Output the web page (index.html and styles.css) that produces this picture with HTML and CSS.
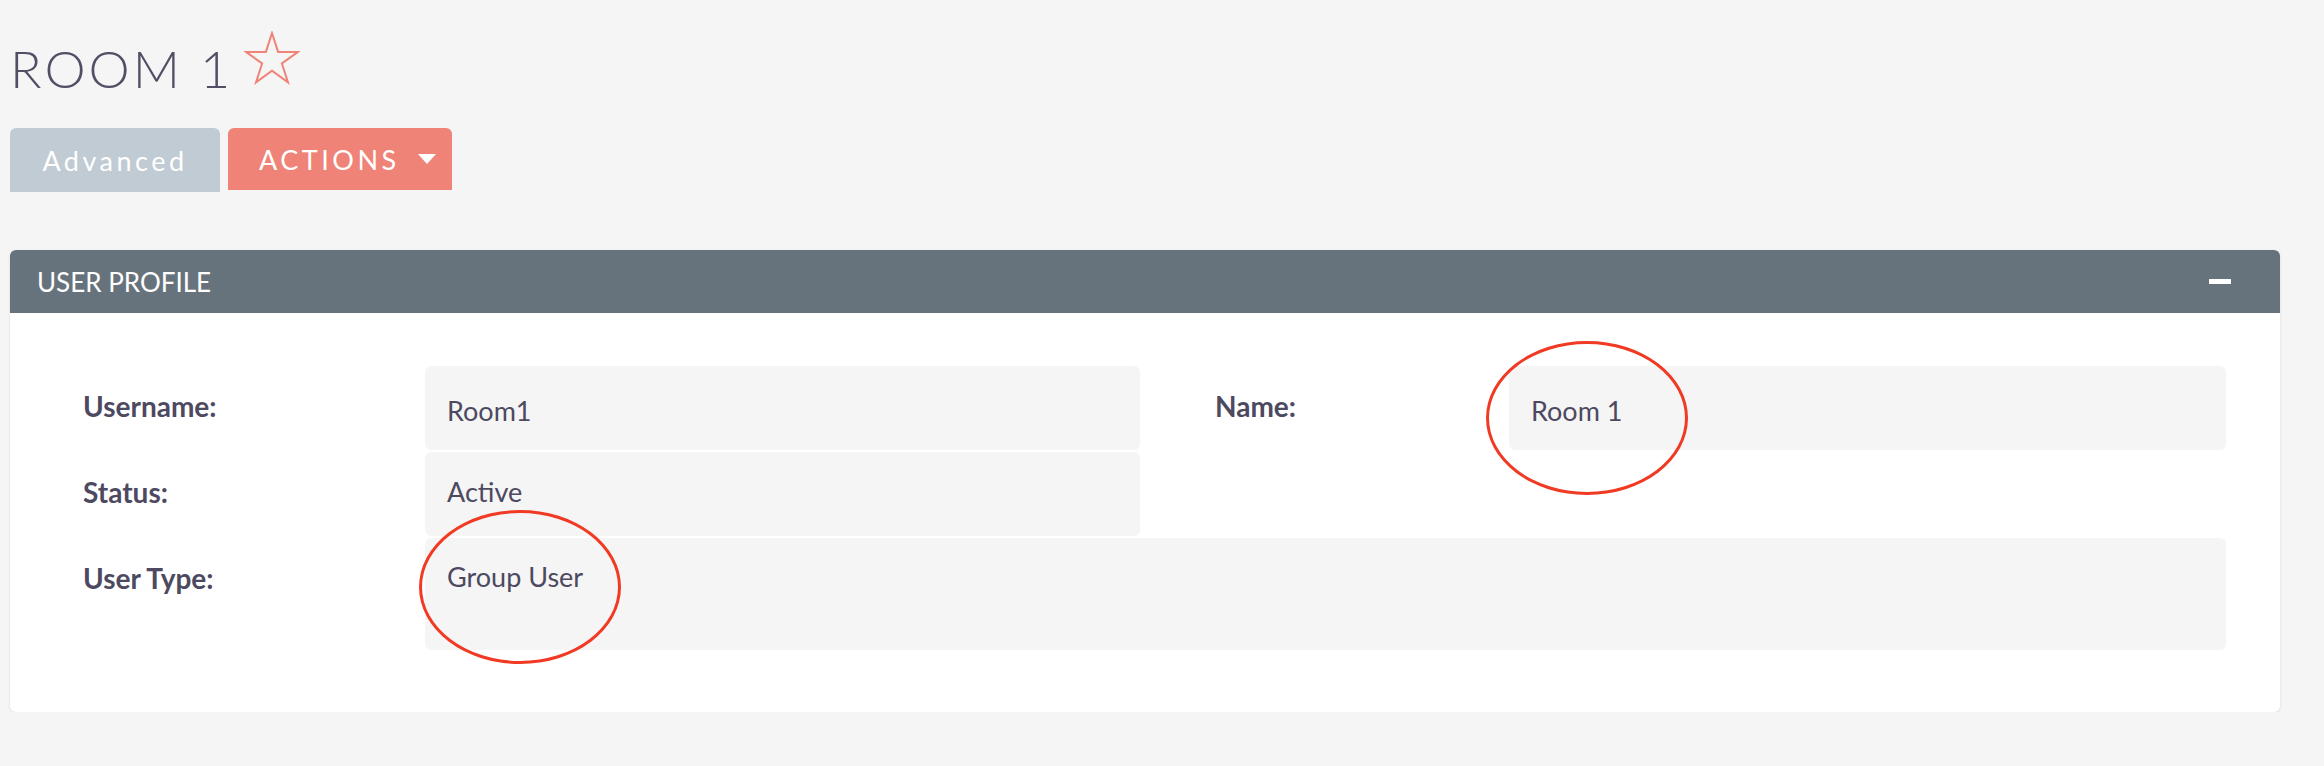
FILE: index.html
```html
<!DOCTYPE html>
<html lang="en">
<head>
<meta charset="UTF-8" />
<title>Room 1</title>
<link rel="stylesheet" href="styles.css">
</head>
<body>

<div class="page">
  <div class="title-row">
    <h1 class="title">ROOM 1</h1>
    <svg class="star" width="56" height="54" viewBox="0 0 56 54">
      <polygon points="28,2 34.1,20.9 54,20.9 37.9,32.5 44,51.4 28,39.7 12,51.4 18.1,32.5 2,20.9 21.9,20.9"
               fill="none" stroke="#f08377" stroke-width="2" stroke-linejoin="miter"/>
    </svg>
  </div>

  <div class="buttons">
    <button class="btn btn-advanced">Advanced</button>
    <button class="btn btn-actions">ACTIONS <span class="caret"></span></button>
  </div>

  <div class="panel">
    <div class="panel-heading">
      <span>USER PROFILE</span>
      <span class="collapse"></span>
    </div>
    <div class="panel-body">
      <div class="label row-1">Username:</div>
      <div class="value row-1">Room1</div>
      <div class="label label-2 row-1">Name:</div>
      <div class="value value-2 row-1">Room 1<span class="mark mark-name"></span></div>

      <div class="label row-2">Status:</div>
      <div class="value row-2">Active</div>

      <div class="label row-3">User Type:</div>
      <div class="value value-wide row-3">Group User<span class="mark mark-type"></span></div>
    </div>
  </div>
</div>

</body>
</html>
```

FILE: styles.css
```css
:root {
  --page-bg: #f5f5f5;
  --text: #4d4960;
  --heading-bg: #67737c;
  --field-bg: #f5f5f5;
  --accent: #f08377;
  --advanced: #c0cbd3;
  --mark: #f03a24;
}

body {
  margin: 0;
  background: var(--page-bg);
  font-family: Lato, "Open Sans", sans-serif;
  color: var(--text);
}

.page {
  padding: 0 44px 0 10px;
}

.title-row {
  display: flex;
  align-items: flex-start;
  padding-top: 31px;
}

.title {
  margin: 6px 0 0 0;
  font-size: 52px;
  line-height: 62px;
  font-weight: 300;
  letter-spacing: 3px;
  color: #534e66;
}

.star {
  margin-left: 11px;
}

.buttons {
  display: flex;
  align-items: flex-start;
  gap: 8px;
  margin-top: 29px;
}

.btn {
  display: flex;
  align-items: center;
  border: none;
  border-radius: 6px 6px 0 0;
  color: #fff;
  font-family: Lato, "Open Sans", sans-serif;
  font-size: 27px;
  letter-spacing: 3.5px;
  cursor: pointer;
}

.btn-advanced {
  background: var(--advanced);
  height: 64px;
  width: 210px;
  justify-content: center;
}

.btn-actions {
  background: var(--accent);
  height: 62px;
  padding: 0 16px 0 31px;
}

.caret {
  margin-left: 18px;
  width: 0;
  height: 0;
  border-left: 9px solid transparent;
  border-right: 9px solid transparent;
  border-top: 10px solid #fff;
}

.panel {
  margin-top: 58px;
  border-radius: 6px;
  background: #fff;
  box-shadow: 0 1px 3px rgba(0, 0, 0, 0.1);
}

.panel-heading {
  display: flex;
  align-items: center;
  justify-content: space-between;
  height: 63px;
  padding: 0 49px 0 27px;
  background: var(--heading-bg);
  border-radius: 6px 6px 0 0;
  color: #fff;
  font-size: 26px;
}

.collapse {
  width: 22px;
  height: 5px;
  background: #fff;
}

.panel-body {
  display: grid;
  grid-template-columns: 342px 715px 75px 294px 1fr;
  grid-template-rows: 84px 84px 112px;
  row-gap: 2px;
  padding: 53px 54px 62px 73px;
}

.label {
  font-size: 28px;
  line-height: 34px;
  font-weight: 700;
  padding-top: 23px;
  grid-column: 1;
}

.label-2 {
  grid-column: 4;
}

.value {
  position: relative;
  grid-column: 2;
  background: var(--field-bg);
  border-radius: 6px;
  font-size: 27px;
  line-height: 34px;
  padding: 23px 0 0 22px;
}

.value.row-1 {
  padding-top: 28px;
}

.value-2 {
  grid-column: 5;
}

.value-wide {
  grid-column: 2 / 6;
  padding-top: 22px;
}

.row-1 { grid-row: 1; }
.row-2 { grid-row: 2; }
.row-3 { grid-row: 3; }

.mark {
  position: absolute;
  width: 196px;
  height: 148px;
  border: 3px solid var(--mark);
  border-radius: 50%;
}

.mark-name {
  left: -23px;
  top: -25px;
}

.mark-type {
  left: -6px;
  top: -28px;
}
```
